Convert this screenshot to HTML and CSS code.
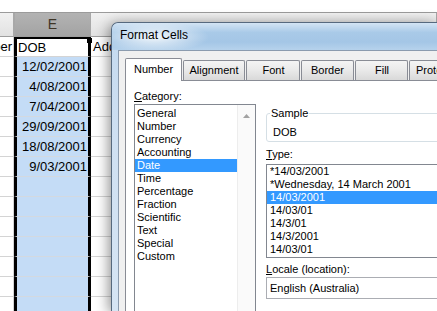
FILE: index.html
```html
<!DOCTYPE html>
<html lang="en">
<head>
    <meta charset="UTF-8">
    <title>Format Cells</title>
    <link rel="stylesheet" href="styles.css">
</head>
<body>
    <div class="sheet">
        <div class="topbar"></div>
        <div class="row head">
            <div class="cell cd"></div>
            <div class="cell ce">E</div>
            <div class="cell cf"></div>
        </div>
        <div class="row">
            <div class="cell cd num">Number</div>
            <div class="cell ce active">DOB<span class="handle"></span></div>
            <div class="cell cf">Address</div>
        </div>
        <div class="row"><div class="cell cd"></div><div class="cell ce sel">12/02/2001</div><div class="cell cf"></div></div>
        <div class="row"><div class="cell cd"></div><div class="cell ce sel">4/08/2001</div><div class="cell cf"></div></div>
        <div class="row"><div class="cell cd"></div><div class="cell ce sel">7/04/2001</div><div class="cell cf"></div></div>
        <div class="row"><div class="cell cd"></div><div class="cell ce sel">29/09/2001</div><div class="cell cf"></div></div>
        <div class="row"><div class="cell cd"></div><div class="cell ce sel">18/08/2001</div><div class="cell cf"></div></div>
        <div class="row"><div class="cell cd"></div><div class="cell ce sel">9/03/2001</div><div class="cell cf"></div></div>
        <div class="row"><div class="cell cd"></div><div class="cell ce sel"></div><div class="cell cf"></div></div>
        <div class="row"><div class="cell cd"></div><div class="cell ce sel"></div><div class="cell cf"></div></div>
        <div class="row"><div class="cell cd"></div><div class="cell ce sel"></div><div class="cell cf"></div></div>
        <div class="row"><div class="cell cd"></div><div class="cell ce sel"></div><div class="cell cf"></div></div>
        <div class="row"><div class="cell cd"></div><div class="cell ce sel"></div><div class="cell cf"></div></div>
        <div class="row"><div class="cell cd"></div><div class="cell ce sel"></div><div class="cell cf"></div></div>
        <div class="row"><div class="cell cd"></div><div class="cell ce sel"></div><div class="cell cf"></div></div>
    </div>

    <div class="dialog">
        <div class="title">Format Cells</div>
        <div class="client">
            <div class="tabs">
                <div class="tab current">Number</div>
                <div class="tab t-align">Alignment</div>
                <div class="tab t-font">Font</div>
                <div class="tab t-border">Border</div>
                <div class="tab t-fill">Fill</div>
                <div class="tab t-prot">Protection</div>
            </div>
            <div class="page">
                <div class="left">
                    <div class="label"><u>C</u>ategory:</div>
                    <div class="listbox cat">
                        <div class="items">
                            <div class="item">General</div>
                            <div class="item">Number</div>
                            <div class="item">Currency</div>
                            <div class="item">Accounting</div>
                            <div class="item picked">Date</div>
                            <div class="item">Time</div>
                            <div class="item">Percentage</div>
                            <div class="item">Fraction</div>
                            <div class="item">Scientific</div>
                            <div class="item">Text</div>
                            <div class="item">Special</div>
                            <div class="item">Custom</div>
                        </div>
                        <div class="scroll">
                            <svg class="arrow" width="7" height="4" viewBox="0 0 7 4"><path d="M0 4 L3.5 0 L7 4 Z" fill="#a2a2a2"/></svg>
                        </div>
                    </div>
                </div>
                <div class="right">
                    <fieldset class="sample">
                        <legend>Sample</legend>
                        <div class="sample-text">DOB</div>
                    </fieldset>
                    <div class="label type-label"><u>T</u>ype:</div>
                    <div class="listbox types">
                        <div class="item">*14/03/2001</div>
                        <div class="item">*Wednesday, 14 March 2001</div>
                        <div class="item picked">14/03/2001</div>
                        <div class="item">14/03/01</div>
                        <div class="item">14/3/01</div>
                        <div class="item">14/3/2001</div>
                        <div class="item">14/03/01</div>
                    </div>
                    <div class="label locale-label"><u>L</u>ocale (location):</div>
                    <div class="combo">English (Australia)</div>
                </div>
            </div>
        </div>
    </div>
</body>
</html>
```

FILE: styles.css
```css
body {
    margin: 0;
    width: 437px;
    height: 311px;
    overflow: hidden;
    position: relative;
    background: #fff;
    font-family: "Liberation Sans", Arial, sans-serif;
}

/* spreadsheet behind the dialog */
.sheet {
    height: 311px;
    overflow: hidden;
}
.topbar {
    height: 12px;
    border-bottom: 1px solid #9b9b9b;
}
.row {
    display: flex;
    height: 20px;
}
.cell {
    box-sizing: border-box;
    height: 100%;
    border-right: 1px solid #d4d4d4;
    border-bottom: 1px solid #d4d4d4;
    font-size: 13px;
    line-height: 19px;
    color: #000;
    white-space: nowrap;
    overflow: hidden;
}
.cd {
    width: 14px;
}
.ce {
    width: 77px;
    border-left: 3px solid #000;
    border-right: 3px solid #000;
    position: relative;
    overflow: visible;
}
.cf {
    flex: 1;
    padding-left: 2px;
}
.num {
    direction: rtl;
    text-align: left;
    padding-right: 1px;
}
.head {
    height: 24px;
}
.head .cell {
    background: linear-gradient(#f1f1f1, #e2e2e2);
    border-right: 1px solid #a8a8a8;
    border-bottom: 1px solid #9e9e9e;
    line-height: 23px;
}
.head .ce {
    border-left: 1px solid #a8a8a8;
    border-right: 1px solid #a8a8a8;
    background: linear-gradient(#b3b3b3, #a3a3a3);
    color: #3f3526;
    text-align: center;
    font-size: 14px;
}
.active {
    border-top: 2px solid #000;
    padding-left: 1px;
    line-height: 17px;
}
.handle {
    position: absolute;
    right: -4px;
    top: -1px;
    width: 5px;
    height: 5px;
    background: #000;
}
.sel {
    background: #c4dcf6;
    border-bottom-color: #d3d9e0;
    text-align: right;
    padding-right: 1px;
}

/* dialog window, cut by the right and bottom edges of the view */
.dialog {
    position: absolute;
    left: 111px;
    top: 22px;
    box-sizing: border-box;
    width: 326px;
    height: 289px;
    overflow: hidden;
    border: 1px solid #56697e;
    border-right: none;
    border-bottom: none;
    border-radius: 7px 0 0 0;
    background: linear-gradient(#c3d9ef, #cfe0f2 40%, #d6e5f4);
    box-shadow: -2px 2px 14px rgba(0, 0, 0, 0.45);
    font-size: 11px;
    color: #000;
}
.title {
    height: 27px;
    box-sizing: border-box;
    padding: 4px 0 0 8px;
    line-height: 16px;
    font-size: 12px;
    color: #000;
    border-radius: 6px 0 0 0;
    background:
        radial-gradient(ellipse 55px 15px at 42px 14px, rgba(255, 255, 255, 0.85), rgba(255, 255, 255, 0)),
        linear-gradient(#d3e4f4, #a9cae8 35%, #a4c6e6 70%, #b6d2ec);
}
.client {
    margin-left: 6px;
    height: 262px;
    border-top: 1px solid #8b9bae;
    border-left: 1px solid #8b9bae;
    background: #f0f0f0;
    padding: 7px 0 0 6px;
    overflow: hidden;
}

.tabs {
    display: flex;
    align-items: flex-end;
    height: 22px;
    line-height: 13px;
}
.tab {
    box-sizing: border-box;
    flex-shrink: 0;
    height: 20px;
    margin-left: 1px;
    padding-top: 3px;
    text-align: center;
    border: 1px solid #898c95;
    border-bottom: none;
    border-radius: 2px 2px 0 0;
    background: linear-gradient(#f4f4f4, #e9e9e9 50%, #d9d9d9);
    white-space: nowrap;
    overflow: hidden;
}
.current {
    height: 23px;
    width: 57px;
    margin-left: 0;
    margin-bottom: -1px;
    padding-top: 4px;
    background: #fff;
    position: relative;
}
.t-align { width: 62px; }
.t-font { width: 54px; padding-left: 1px; }
.t-border { width: 53px; }
.t-fill { width: 53px; padding-left: 1px; }
.t-prot { width: 64px; text-align: left; padding-left: 6px; }

.page {
    height: 240px;
    border-top: 1px solid #898c95;
    border-left: 1px solid #898c95;
    background: #fff;
    padding: 9px 0 0 8px;
    display: flex;
    gap: 10px;
}
.label {
    line-height: 13px;
}
.left {
    width: 122px;
    flex-shrink: 0;
}
.listbox {
    box-sizing: border-box;
    border: 1px solid #828790;
    background: #fff;
    line-height: 13px;
}
.cat {
    margin-top: 1px;
    height: 230px;
    display: flex;
    padding-top: 2px;
}
.cat .items {
    flex: 1;
}
.item {
    height: 13px;
    padding-left: 2px;
    white-space: nowrap;
}
.picked {
    background: #3399ff;
    color: #fff;
}
.scroll {
    width: 17px;
    margin-top: -2px;
    border-left: 1px solid #ededed;
    background: #fafafa;
}
.arrow {
    display: block;
    margin: 9px 0 0 5px;
}

.right {
    width: 200px;
    flex-shrink: 0;
}
.sample {
    margin: 17px 0 0 0;
    padding: 0 3px 2px 3px;
    border: 1px solid #d5dfe5;
    border-radius: 3px;
    line-height: 13px;
}
.sample legend {
    padding: 0 1px;
}
.sample-text {
    padding: 6px 0 0 3px;
}
.type-label {
    margin-top: 6px;
}
.types {
    margin-top: 3px;
    padding-bottom: 1px;
}
.types .item {
    padding-left: 3px;
}
.locale-label {
    margin-top: 5px;
}
.combo {
    box-sizing: border-box;
    margin-top: 1px;
    height: 22px;
    border: 1px solid #abadb3;
    padding-left: 3px;
    line-height: 20px;
    background: #fff;
}
```
